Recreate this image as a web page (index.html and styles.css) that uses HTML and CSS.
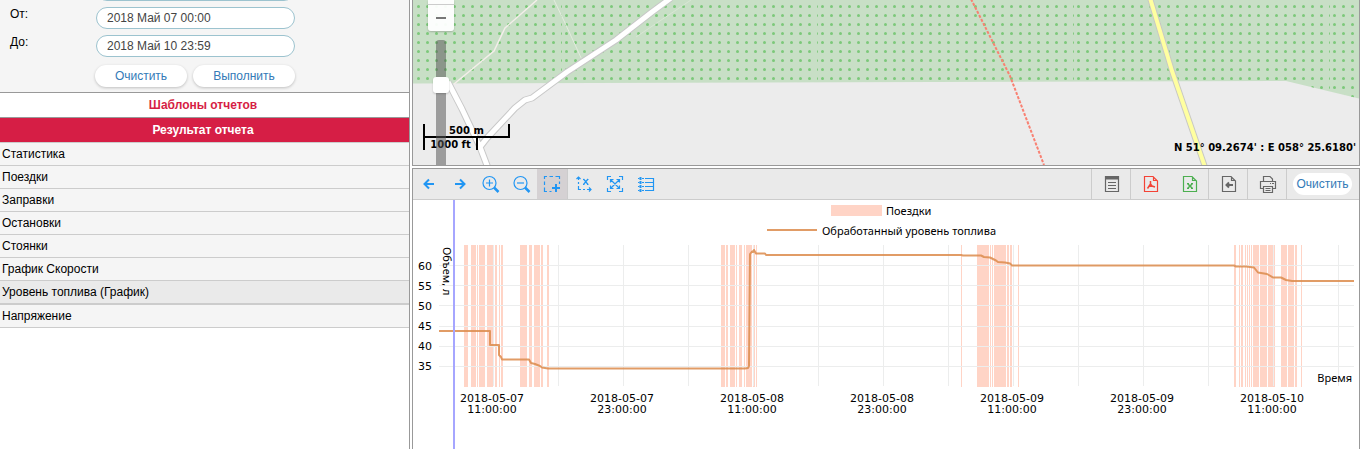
FILE: index.html
```html
<!DOCTYPE html>
<html lang="ru">
<head>
<meta charset="utf-8">
<title>Отчеты</title>
<link rel="stylesheet" href="styles.css">
</head>
<body>
<div class="app">
  <aside class="sidebar">
    <form class="filter">
      <div class="clipped"><input class="field" type="text" aria-label="Интервал"></div>
      <div class="row"><label for="from">От:</label><input class="field" id="from" type="text" value="2018 Май 07 00:00"></div>
      <div class="row"><label for="to">До:</label><input class="field" id="to" type="text" value="2018 Май 10 23:59"></div>
      <div class="actions">
        <button class="pill" type="button">Очистить</button>
        <button class="pill wide" type="button">Выполнить</button>
      </div>
    </form>
    <button class="section" type="button">Шаблоны отчетов</button>
    <button class="section open" type="button">Результат отчета</button>
    <nav class="results">
      <a href="#">Статистика</a>
      <a href="#">Поездки</a>
      <a href="#">Заправки</a>
      <a href="#">Остановки</a>
      <a href="#">Стоянки</a>
      <a href="#">График Скорости</a>
      <a href="#" class="current">Уровень топлива (График)</a>
      <a href="#">Напряжение</a>
    </nav>
  </aside>

  <main class="content">
    <section class="map">
      <svg class="map-canvas" viewBox="413 0 946 165" preserveAspectRatio="xMinYMin slice" aria-hidden="true">
        <defs>
          <pattern id="dots" x="0" y="2" width="9" height="9" patternUnits="userSpaceOnUse"><circle cx="4.500" cy="4.500" r="1.500" fill="#7cc87a"/></pattern>
          <pattern id="tile" x="50" y="0" width="256" height="180" patternUnits="userSpaceOnUse"><rect width="256" height="180" fill="url(#dots)"/></pattern>
        </defs>
        <rect x="413" width="946" height="165" fill="#ececec"/>
        <path d="M413 0H1359V98.500L1286 81L413 83.500Z" fill="#c8dfc6"/>
        <path d="M413 0H1359V98.500L1286 81L413 83.500Z" fill="url(#tile)"/>
        <g fill="none" stroke="#f4eeea" stroke-width="1.500">
          <path d="M537 0L505 28L494 51L454 84"/>
          <path d="M554 0L565 23L583 62" stroke="#e4ebdf" stroke-width="1"/>
          <path d="M691 0L636 37" stroke="#d8e6d4" stroke-width="1"/>
        </g>
        <g fill="none" stroke-linejoin="round">
          <path d="M671 -2L652 12L616 40L567 72L532 98L525 100L515 108L487 138L480 147L488 168M448 82L462 109L480 147" stroke="#c8c8c8" stroke-width="7"/>
          <path d="M671 -2L652 12L616 40L567 72L532 98L525 100L515 108L487 138L480 147L488 168M448 82L462 109L480 147" stroke="#fff" stroke-width="5"/>
          <path d="M1150 -2L1172 71L1205 167" stroke="#c9c9c4" stroke-width="6"/>
          <path d="M1150 -2L1172 71L1205 167" stroke="#ffffa0" stroke-width="4"/>
          <path d="M971 -1L1010 76L1044 165" stroke="#f98072" stroke-width="2" stroke-dasharray="3 1.500"/>
        </g>
      </svg>
      <div class="zoom">
        <button class="zoom-out" type="button" aria-label="Уменьшить"><i></i></button>
        <div class="track"></div>
        <div class="handle"></div>
      </div>
      <div class="scale"><div class="metric">500 m</div><div class="imperial">1000 ft</div></div>
      <div class="coords">N 51° 09.2674' : E 058° 25.6180'</div>
    </section>

    <section class="report">
      <div class="toolbar">
        <div class="tools">
          <button type="button" aria-label="Назад"><svg viewBox="0 0 20 20"><path d="M15 10H6M10 5.500L5.500 10L10 14.500" stroke-width="2"/></svg></button>
          <button type="button" aria-label="Вперед"><svg viewBox="0 0 20 20"><path d="M5 10H14M10 5.500L14.500 10L10 14.500" stroke-width="2"/></svg></button>
          <button type="button" aria-label="Увеличить"><svg viewBox="0 0 20 20"><circle cx="8.500" cy="9" r="6.500"/><path d="M5 9H12M8.500 5.500V12.500"/><path d="M13 13.500L17.500 18" stroke-width="2.500"/></svg></button>
          <button type="button" aria-label="Уменьшить"><svg viewBox="0 0 20 20"><circle cx="8.500" cy="9" r="6.500"/><path d="M5 9H12"/><path d="M13 13.500L17.500 18" stroke-width="2.500"/></svg></button>
          <button class="active" type="button" aria-label="Выделить область"><svg viewBox="0 0 20 20"><path d="M2.500 5V2.500H5M7.500 2.500H11M13.500 2.500H17.500V5M17.500 7.500V10M2.500 7.500V11M2.500 13.500V17.500H5M7.500 17.500H9.500"/><path d="M10 14H18M14 10V18" stroke-width="2"/></svg></button>
          <button type="button" aria-label="Масштаб по X"><svg viewBox="0 0 20 20"><path d="M4.500 3V6M4.500 8V10M4.500 12V15.500H7M9 15.500H11M13 15.500H17M2.500 5L4.500 3L6.500 5M15 13.500L17 15.500L15 17.500M9.500 5L14 10.500M14 5L9.500 10.500M9 5.500H10.500M13 5.500H14.500M9 10.500H10.500M13 10.500H14.500"/></svg></button>
          <button type="button" aria-label="Весь график"><svg viewBox="0 0 20 20"><path d="M2.500 6V2.500H6M14 2.500H17.500V6M17.500 14V17.500H14M6 17.500H2.500V14M5.500 5.500L14.500 14.500M14.500 5.500L5.500 14.500M5.500 8.500V5.500H8.500M11.500 5.500H14.500V8.500M14.500 11.500V14.500H11.500M8.500 14.500H5.500V11.500"/></svg></button>
          <button type="button" aria-label="Легенда"><svg viewBox="0 0 20 20"><path d="M9 4.500H17.500V16.500H9M9 8.500H17M9 12.500H17M2 4.500H3.500M6 4.500H8M2 8.500H3.500M6 8.500H8M2 12.500H3.500M6 12.500H8M2 16.500H3.500M6 16.500H8"/><path d="M4.500 3V6M4.500 7V10M4.500 11V14M4.500 15V18" stroke-width="2"/></svg></button>
        </div>
        <div class="exports">
          <button type="button" aria-label="Таблица"><svg viewBox="0 0 20 20"><path d="M3.500 2.500H16.500V17.500H3.500ZM6 8.500H14M6 11.500H14M6 14.500H14"/><path d="M3 4H17" stroke-width="3"/></svg></button>
          <button class="pdf" type="button" aria-label="PDF"><svg viewBox="0 0 20 20"><path d="M3.500 2.500H12L16.500 7V17.500H3.500ZM12.500 2.500V6.500H16.500"/><path d="M9.500 7V10L6.500 14.500M9.500 10L11 12L14 13M7.500 12.500L11 12" stroke-width="1.500"/></svg></button>
          <button class="xls" type="button" aria-label="Excel"><svg viewBox="0 0 20 20"><path d="M3.500 2.500H12L16.500 7V17.500H3.500ZM12.500 2.500V6.500H16.500M7 9.500H9M11 9.500H13M7 14.500H9M11 14.500H13"/><path d="M7.500 9.500L12.500 14.500M12.500 9.500L7.500 14.500" stroke-width="1.500"/></svg></button>
          <button type="button" aria-label="Экспорт"><svg viewBox="0 0 20 20"><path d="M3.500 2.500H12L16.500 7V17.500H3.500ZM12.500 2.500V6.500H16.500"/><path d="M14 11H7M10 8.500L7.500 11L10 13.500" stroke-width="2"/></svg></button>
          <button type="button" aria-label="Печать"><svg viewBox="0 0 20 20"><path d="M5.500 7V2.500H12L14.500 5V7M5 14.500H2.500V7.500H17.500V14.500H15M5.500 12.500H14.500V18.500H5.500ZM7.500 14.500H12.500M7.500 16.500H12.500M12 9.500H13M14 9.500H16"/></svg></button>
          <div class="clear"><button class="pill" type="button">Очистить</button></div>
        </div>
      </div>
      <svg class="chart" viewBox="413 200 946 249" preserveAspectRatio="xMinYMin meet" role="img" aria-label="Уровень топлива">
        <g class="bands">
          <path d="M831 205h51v11h-51z"/>
          <path d="M464 245h4v142h-4zM471 245h5v142h-5zM477 245h1v142h-1zM479 245h6v142h-6zM487 245h6v142h-6zM495 245h2v142h-2zM499 245h1v142h-1zM501 245h2v142h-2z"/>
          <path d="M520 245h7v142h-7zM529 245h3v142h-3zM534 245h6v142h-6zM541 245h2v142h-2zM547 245h2v142h-2z"/>
          <path d="M721 245h4v142h-4zM726 245h2v142h-2zM730 245h5v142h-5zM736 245h1v142h-1zM739 245h3v142h-3zM744 245h1v142h-1zM746 245h6v142h-6zM753 245h2v142h-2zM756 245h1v142h-1z"/>
          <path d="M961 245h1v142h-1zM977 245h12v142h-12zM990 245h1v142h-1zM992 245h1v142h-1zM994 245h12v142h-12zM1007 245h2v142h-2zM1010 245h2v142h-2zM1018 245h1v142h-1z"/>
          <path d="M1234 245h2v142h-2zM1239 245h1v142h-1zM1241 245h2v142h-2zM1245 245h1v142h-1zM1247 245h1v142h-1zM1249 245h1v142h-1zM1251 245h1v142h-1zM1253 245h6v142h-6zM1260 245h7v142h-7zM1268 245h7v142h-7zM1281 245h6v142h-6zM1288 245h6v142h-6zM1295 245h2v142h-2zM1301 245h1v142h-1z"/>
        </g>
        <path class="grid" d="M439 265.500H1354M439 285.500H1354M439 305.500H1354M439 326.500H1354M439 346.500H1354M439 366.500H1354M493.500 245V386M558.500 245V386M623.500 245V386M688.500 245V386M753.500 245V386M818.500 245V386M883.500 245V386M948.500 245V386M1013.500 245V386M1078.500 245V386M1143.500 245V386M1208.500 245V386M1273.500 245V386M1338.500 245V386"/>
        <path class="level" d="M439 331H490V345H499V355L501 357L502 359.500H529L531 363L535 364L540 366L542 367.500L548 368.500H745L748 368L749 366L750 254L752 251.500L753 252L754 250L756 253.500H765L766 255H961L963 255.500H981L984 257L990 257.500L993 259L996 260.500L998 262L1005 262.500L1010 263.500L1012 265.500H1234L1236 266.500H1246L1254 267.500L1258 272.500L1267 274L1273 277.500H1281L1286 280L1292 281H1354"/>
        <path class="key" d="M767 230H817"/>
        <path class="cursor" d="M454 200V449"/>
        <g class="names">
          <text x="886" y="215">Поездки</text>
          <text x="822" y="235">Обработанный уровень топлива</text>
          <text class="end" x="1352" y="382">Время</text>
          <text transform="translate(443 247) rotate(90)">Объем, л</text>
        </g>
        <g class="labels">
          <g class="end">
            <text x="432" y="270">60</text><text x="432" y="290">55</text><text x="432" y="310">50</text>
            <text x="432" y="330">45</text><text x="432" y="350">40</text><text x="432" y="370">35</text>
          </g>
          <g class="mid">
            <text x="492" y="402">2018-05-07</text><text x="492" y="413">11:00:00</text>
            <text x="622" y="402">2018-05-07</text><text x="622" y="413">23:00:00</text>
            <text x="752" y="402">2018-05-08</text><text x="752" y="413">11:00:00</text>
            <text x="882" y="402">2018-05-08</text><text x="882" y="413">23:00:00</text>
            <text x="1012" y="402">2018-05-09</text><text x="1012" y="413">11:00:00</text>
            <text x="1142" y="402">2018-05-09</text><text x="1142" y="413">23:00:00</text>
            <text x="1272" y="402">2018-05-10</text><text x="1272" y="413">11:00:00</text>
          </g>
        </g>
      </svg>
    </section>
  </main>
</div>
</body>
</html>
```

FILE: styles.css
```css
* { box-sizing: border-box; }
body { margin: 0; background: #fff; color: #000; font: 12px/16px "Liberation Sans", Arial, sans-serif; }
button, input { font: inherit; color: inherit; margin: 0; }
button { cursor: pointer; }

.app { display: grid; grid-template-columns: 410px 1fr; gap: 2px; height: 100vh; padding-right: 1px; overflow: hidden; }

.sidebar { border-right: 1px solid #999; }
.filter { background: #f5f5f5; padding-bottom: 5px; }
.clipped { height: 1px; margin-bottom: 6px; padding-left: 96px; display: flex; align-items: flex-end; overflow: hidden; }
.row { display: flex; align-items: flex-start; padding-left: 10px; margin-bottom: 6px; }
.row label { width: 86px; line-height: 14px; }
.field { width: 199px; height: 22px; padding: 0 10px; border: 1px solid #9cc3cf; border-radius: 11px; background: #fff; color: #444; outline: none; }
.actions { display: flex; gap: 6px; padding: 2px 0 0 95px; }
.pill { width: 92px; height: 22px; padding: 0; border: 0; border-radius: 11px; background: #fff; color: #337ab7; box-shadow: 0 1px 3px rgba(0, 0, 0, .22); }
.pill.wide { width: 102px; }
.section { display: block; width: 100%; height: 25px; padding: 0 3px 0 0; border: 0; border-top: 1px solid #999; background: #fff; color: #d61e45; font-weight: bold; }
.section.open { background: #d61e45; color: #fff; }
.results { border-top: 1px solid #ccc; }
.results a { display: block; padding: 3px 2px; border-bottom: 1px solid #ccc; background: #f5f5f5; color: #000; text-decoration: none; }
.results .current { background: #eaeaea; border-bottom-width: 2px; }

.content { display: flex; flex-direction: column; gap: 2px; min-width: 0; }
.map { position: relative; flex: 0 0 166px; border: solid #999; border-width: 0 1px 1px; overflow: hidden; }
.map-canvas { display: block; width: 100%; height: 100%; }
.zoom { position: absolute; left: 15px; top: 0; width: 26px; height: 165px; }
.zoom-out { position: absolute; top: 0; width: 26px; height: 31px; padding: 0; border: 0; border-radius: 0 0 3px 3px; background: linear-gradient(#ccc, #ccc) 0 4px / 100% 1px no-repeat rgba(255, 255, 255, .94); box-shadow: 0 1px 2px rgba(0, 0, 0, .2); }
.zoom-out i { display: block; width: 10px; height: 2px; margin: 5px auto 0; background: #777; }
.track { position: absolute; z-index: 2; left: 8px; top: 40px; width: 10px; bottom: 0; border-radius: 3px 3px 0 0; background: rgba(85, 85, 85, .53); }
.handle { position: absolute; z-index: 3; left: 5px; top: 77px; width: 16px; height: 16px; border-radius: 3px; background: #fff; box-shadow: 0 1px 2px rgba(0, 0, 0, .2); }
.scale { position: absolute; left: 10px; top: 124px; width: 87px; font: bold 10px/12px "DejaVu Sans", Verdana, sans-serif; text-align: center; }
.metric { height: 14px; border: solid #000; border-width: 0 2px 2px; line-height: 14px; }
.imperial { width: 55px; height: 12px; border: solid #000; border-width: 0 2px; line-height: 14px; white-space: nowrap; }
.coords { position: absolute; right: 3px; bottom: 10px; font: bold 10px/14px "DejaVu Sans", Verdana, sans-serif; }

.report { flex: 1; min-height: 0; border: solid #999; border-width: 1px 1px 0; overflow: hidden; }
.toolbar { display: flex; justify-content: space-between; height: 31px; background: #eaeaea; border-bottom: 1px solid #ccc; }
.tools, .exports { display: flex; }
.tools button, .exports > button { display: flex; align-items: center; justify-content: center; width: 31px; height: 30px; padding: 0; border: 0; background: none; }
.toolbar svg { width: 20px; height: 20px; fill: none; stroke: #2196f3; stroke-width: 1.2; }
.tools .active { background: #d5d1d3; border-right: 1px solid #ccc; }
.exports > button { width: 39px; padding-left: 2px; border-left: 1px solid #ccc; }
.exports svg { stroke: #666; }
.exports .pdf svg { stroke: #f44336; }
.exports .xls { border-left: 0; }
.exports .xls svg { stroke: #4caf50; }
.clear { display: flex; align-items: center; padding: 0 7px 0 6px; border-left: 1px solid #ccc; }
.clear .pill { width: 59px; box-shadow: none; }

.chart { display: block; width: 100%; }
.bands { fill: #ffd4c6; }
.grid { fill: none; stroke: #eceded; }
.level, .key { fill: none; stroke: #dc8b4b; stroke-width: 2; stroke-opacity: .85; stroke-linejoin: round; }
.cursor { stroke: #a6a6ff; stroke-width: 2; }
.labels { font: 11px "DejaVu Sans", Verdana, sans-serif; }
.names { font: 11px "Noto Sans", Tahoma, sans-serif; }
.end { text-anchor: end; }
.mid { text-anchor: middle; }
```
